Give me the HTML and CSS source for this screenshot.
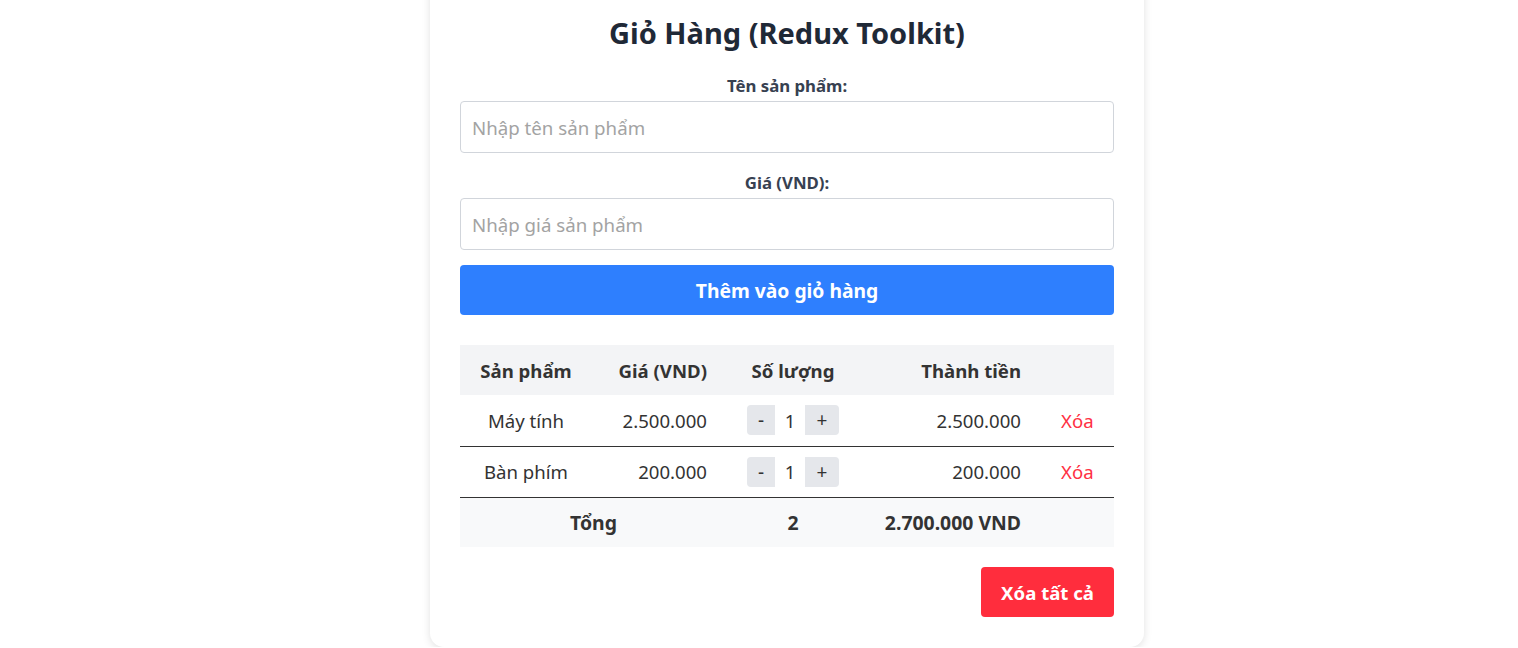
FILE: index.html
```html
<!DOCTYPE html>
<html lang="vi">
<head>
<meta charset="utf-8">
<title>Giỏ Hàng (Redux Toolkit)</title>
<link rel="stylesheet" href="styles.css">
</head>
<body>
<div class="card">
  <h2 class="title">Giỏ Hàng (Redux Toolkit)</h2>
  <div class="field">
    <label class="label">Tên sản phẩm:</label>
    <input class="input" type="text" placeholder="Nhập tên sản phẩm">
  </div>
  <div class="field">
    <label class="label">Giá (VND):</label>
    <input class="input" type="text" placeholder="Nhập giá sản phẩm">
  </div>
  <button class="btn-add">Thêm vào giỏ hàng</button>

  <table class="cart">
    <colgroup>
      <col class="c1"><col class="c2"><col class="c3"><col class="c4"><col class="c5">
    </colgroup>
    <thead>
      <tr>
        <th class="center">Sản phẩm</th>
        <th class="right">Giá (VND)</th>
        <th class="center">Số lượng</th>
        <th class="right">Thành tiền</th>
        <th></th>
      </tr>
    </thead>
    <tbody>
      <tr>
        <td class="center">Máy tính</td>
        <td class="right">2.500.000</td>
        <td class="center"><div class="qty"><button class="qbtn minus">-</button><span class="qnum">1</span><button class="qbtn plus">+</button></div></td>
        <td class="right">2.500.000</td>
        <td class="del"><button class="btn-del">Xóa</button></td>
      </tr>
      <tr>
        <td class="center">Bàn phím</td>
        <td class="right">200.000</td>
        <td class="center"><div class="qty"><button class="qbtn minus">-</button><span class="qnum">1</span><button class="qbtn plus">+</button></div></td>
        <td class="right">200.000</td>
        <td class="del"><button class="btn-del">Xóa</button></td>
      </tr>
    </tbody>
    <tfoot>
      <tr>
        <td class="center total-label" colspan="2">Tổng</td>
        <td class="center">2</td>
        <td class="right">2.700.000 VND</td>
        <td></td>
      </tr>
    </tfoot>
  </table>

  <div class="actions">
    <button class="btn-clear">Xóa tất cả</button>
  </div>
</div>
</body>
</html>
```

FILE: styles.css
```css
* { box-sizing: border-box; }
html, body { margin: 0; padding: 0; background: #ffffff; }
body {
  font-family: "Noto Sans", "Open Sans", "DejaVu Sans", sans-serif;
  color: #333333;
  overflow: hidden;
  padding-left: 56px;
}
.card {
  width: 714px;
  margin: -20px auto 0;
  padding: 36px 30px 30px;
  background: #ffffff;
  border-radius: 14px;
  box-shadow: 0 2px 8px rgba(0, 0, 0, 0.12);
}
.title {
  margin: 0 0 26px;
  font-size: 29px;
  line-height: 34px;
  font-weight: 700;
  text-align: center;
  color: #1f2937;
}
.field { margin-bottom: 20px; }
.field + .field { margin-bottom: 15px; }
.label {
  display: block;
  text-align: center;
  font-size: 16.8px;
  line-height: 20px;
  font-weight: 700;
  color: #374151;
  margin-bottom: 5px;
}
.input {
  display: block;
  width: 100%;
  height: 52px;
  padding: 0 11px;
  border: 1px solid #d1d5db;
  border-radius: 4px;
  font-family: inherit;
  font-size: 18.7px;
  color: #333;
  outline: none;
}
.input::placeholder { color: #a3a3a3; }
.btn-add {
  display: block;
  width: 100%;
  height: 50px;
  border: none;
  border-radius: 4px;
  background: #2e7ffe;
  color: #ffffff;
  font-family: inherit;
  font-size: 19.3px;
  font-weight: 700;
  margin-bottom: 30px;
}
.cart {
  width: 100%;
  border-collapse: collapse;
  table-layout: fixed;
  font-size: 18.6px;
}
.c1 { width: 132px; }
.c2 { width: 127px; }
.c3 { width: 148px; }
.c4 { width: 166px; }
.c5 { width: 81px; }
.cart th, .cart td { padding: 0 12px; }
.cart thead tr { background: #f3f4f6; height: 50px; }
.cart th { font-weight: 700; color: #333; }
.cart tbody tr { height: 51px; border-bottom: 1px solid #333333; }
.cart tfoot tr { background: #f8f9fa; height: 50px; }
.cart tfoot td { font-weight: 700; font-size: 19.4px; }
.cart tfoot .total-label { padding-left: 20px; }
.center { text-align: center; }
.right { text-align: right; }
.qty { display: inline-flex; align-items: center; vertical-align: middle; }
.qbtn {
  height: 30px;
  border: none;
  background: #e5e7eb;
  color: #333;
  font-family: inherit;
  font-size: 19px;
  padding: 0;
}
.minus { width: 28px; border-radius: 4px 0 0 4px; }
.plus { width: 34px; border-radius: 0 4px 4px 0; }
.qnum { width: 30px; text-align: center; font-size: 18.6px; }
.del { text-align: left; }
.btn-del {
  border: none;
  background: none;
  padding: 0 0 0 16px;
  color: #ff3043;
  font-family: inherit;
  font-size: 18.6px;
}
.actions { display: flex; justify-content: flex-end; margin-top: 20px; }
.btn-clear {
  height: 50px;
  padding: 0 20px;
  border: none;
  border-radius: 4px;
  background: #ff2d3d;
  color: #ffffff;
  font-family: inherit;
  font-size: 18.6px;
  font-weight: 700;
}
```
